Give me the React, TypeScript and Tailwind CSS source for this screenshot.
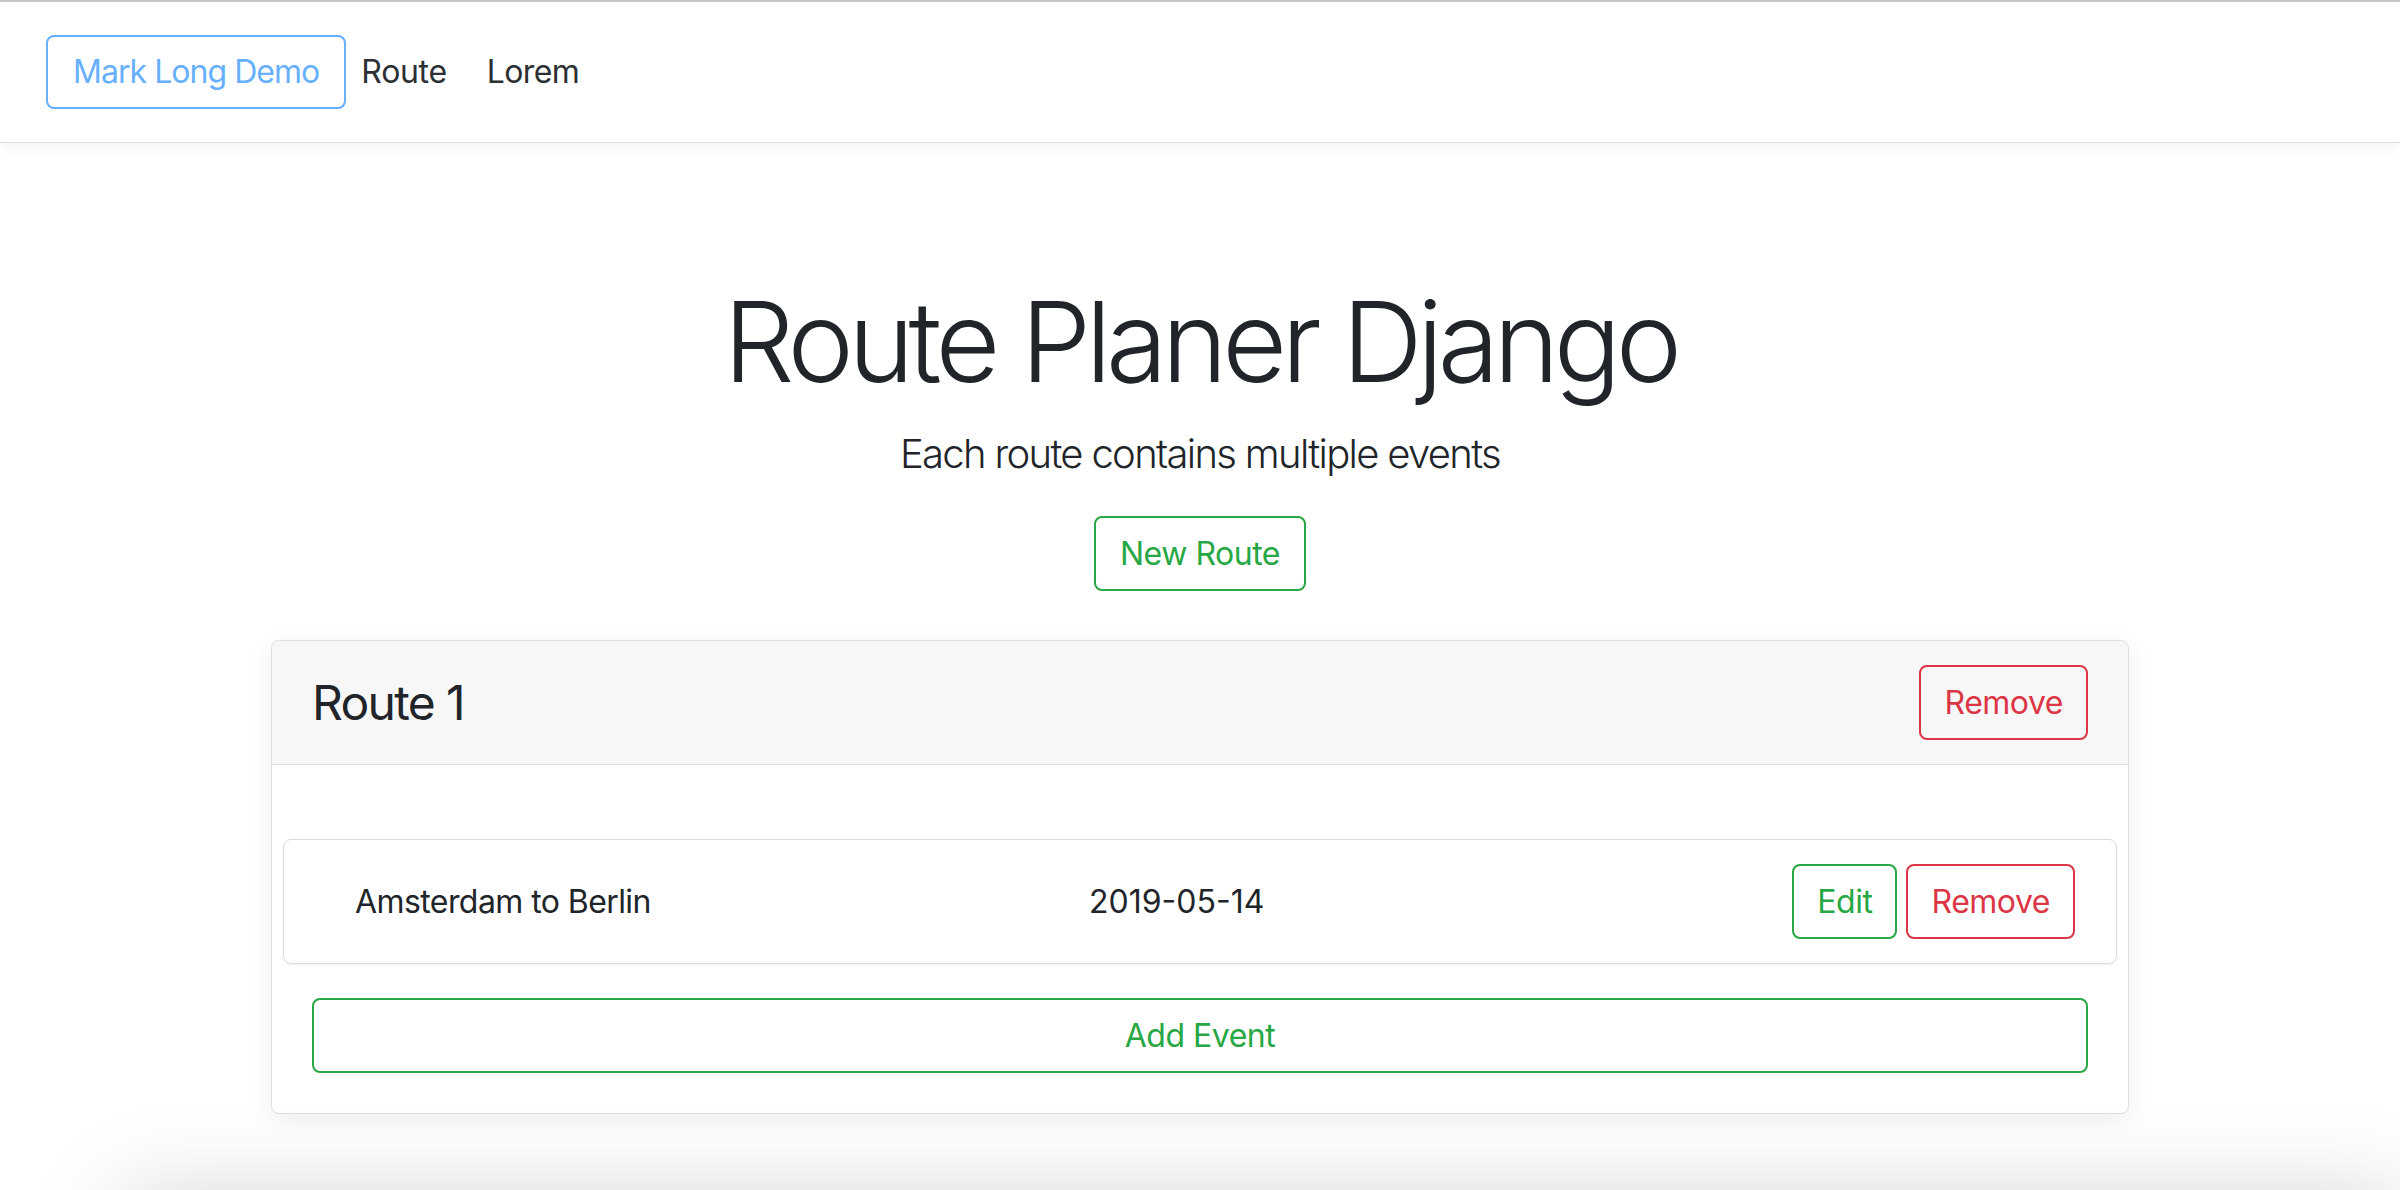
import React from 'react';

interface RouteEvent {
  title: string;
  date: string;
}

const events: RouteEvent[] = [{ title: 'Amsterdam to Berlin', date: '2019-05-14' }];

const outlineBtn =
  'h-[75px] border-2 rounded-[8px] flex items-center justify-center text-[32px] leading-none tracking-[-0.015em] bg-transparent';

const App: React.FC = () => {
  return (
    <div
      className="h-[1190px] overflow-hidden bg-white text-[#212529] flex flex-col"
      style={{ fontFamily: 'Inter, "Noto Sans", sans-serif' }}
    >
      <div className="h-[1198px] shrink-0 flex flex-col">
        <nav className="h-[143px] shrink-0 border-t-2 border-t-[#c6c6c6] border-b border-b-[#dadde0] flex items-center pl-[46px] shadow-[0_4px_14px_rgba(0,0,0,0.05)] relative z-10">
          <a className="h-[74px] px-[25px] border-2 border-[#66b0ff] rounded-[8px] flex items-center text-[32px] tracking-[-0.03em] text-[#66b0ff]">
            Mark Long Demo
          </a>
          <a className="ml-[15px] text-[32px] tracking-[-0.01em] text-[#2c3034]">Route</a>
          <a className="ml-[40px] text-[32px] tracking-[-0.02em] text-[#2c3034]">Lorem</a>
        </nav>

        <main className="flex flex-col items-center pt-[131px]">
          <h1 className="text-[112px] font-light leading-[1.2] tracking-[-0.05em]">Route Planer Django</h1>
          <p className="mt-[16px] text-[40px] font-light leading-[1.5] tracking-[-0.042em]">
            Each route contains multiple events
          </p>
          <button className={`${outlineBtn} mt-[32px] h-[74px] px-[24px] border-[#28a745] text-[#28a745]`}>
            New Route
          </button>

          <div className="mt-[49px] w-[1858px] border border-[#dfdfdf] rounded-[8px] bg-white shadow-[0_6px_24px_rgba(0,0,0,0.07)]">
            <div className="bg-[#f7f7f7] border-b border-[#dcdcdc] rounded-t-[8px] px-[40px] py-[24px] flex items-center justify-between">
              <h3 className="text-[48px] font-normal leading-none tracking-[-0.035em]">Route 1</h3>
              <button className={`${outlineBtn} px-[23px] border-[#dc3545] text-[#dc3545]`}>Remove</button>
            </div>

            <div className="px-[40px] pt-[74px] pb-[40px]">
              {events.map((ev) => (
                <div
                  key={ev.title}
                  className="-mx-[29px] h-[125px] border border-[#dcdcdc] rounded-[8px] flex items-center pl-[71px] pr-[41px] shadow-[0_1px_2px_rgba(0,0,0,0.06)]"
                >
                  <div className="w-[734px] text-[32px] tracking-[-0.018em]">{ev.title}</div>
                  <div className="flex-1 text-[32px]">{ev.date}</div>
                  <div className="flex gap-[9px]">
                    <button className={`${outlineBtn} px-[23px] border-[#28a745] text-[#28a745]`}>Edit</button>
                    <button className={`${outlineBtn} px-[23px] border-[#dc3545] text-[#dc3545]`}>Remove</button>
                  </div>
                </div>
              ))}
              <button className={`${outlineBtn} mt-[34px] w-full border-[#28a745] text-[#28a745]`}>Add Event</button>
            </div>
          </div>
        </main>
      </div>

      <div className="ml-[122px] h-[300px] shrink-0 bg-white shadow-[0_0_90px_rgba(0,0,0,0.18)]" />
    </div>
  );
};

export default App;
